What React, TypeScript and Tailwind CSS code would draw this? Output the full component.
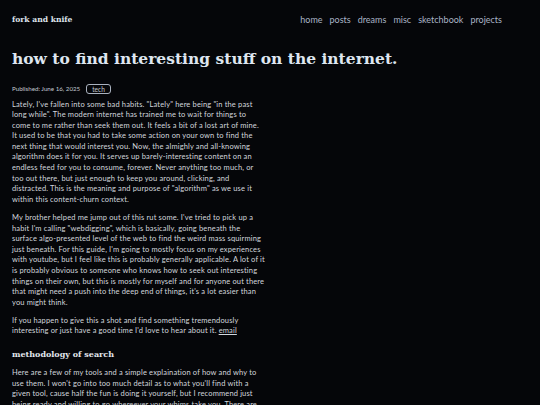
import React from 'react';

const slab = "font-['DejaVu_Serif',serif]";
const body = "font-['Lato',sans-serif]";

const navItems = ['home', 'posts', 'dreams', 'misc', 'sketchbook', 'projects'];

export default function App() {
  return (
    <div className={`min-h-[405px] bg-[#050609] text-[#d2d6dd] ${body}`}>
      {/* Header */}
      <header className="flex h-[40px] items-center justify-between pl-3 pr-[38px]">
        <span className={`${slab} text-[7.6px] font-bold text-[#dfe4ec]`}>fork and knife</span>
        <nav className="flex gap-[7px] text-[9px] text-[#a9b4c6]">
          {navItems.map((item) => (
            <a key={item} href="#">{item}</a>
          ))}
        </nav>
      </header>

      <main className="px-3">
        <h1 className={`${slab} mt-[11px] text-[15.5px] font-bold leading-none text-[#dfe6f0]`}>
          how to find interesting stuff on the internet.
        </h1>

        <div className="mt-[17px] flex items-center gap-[6px] text-[6.2px] text-[#c4c9d1]">
          <span>Published: June 16, 2025</span>
          <span className="rounded-[3px] border border-[#aab2bf] px-[5px] text-[6.6px] leading-[8px]">tech</span>
        </div>

        <article className="mt-[6px] w-[253px] space-y-[7.5px] text-[7.5px] leading-[10.6px] tracking-[0.15px]">
          <p>
            Lately, I've fallen into some bad habits. "Lately" here being "in the past long while". The modern
            internet has trained me to wait for things to come to me rather than seek them out. It feels a bit of a
            lost art of mine. It used to be that you had to take some action on your own to find the next thing that
            would interest you. Now, the almighly and all-knowing algorithm does it for you. It serves up
            barely-interesting content on an endless feed for you to consume, forever. Never anything too much, or too
            out there, but just enough to keep you around, clicking, and distracted. This is the meaning and purpose of
            "algorithm" as we use it within this content-churn context.
          </p>
          <p>
            My brother helped me jump out of this rut some. I've tried to pick up a habit I'm calling "webdigging",
            which is basically, going beneath the surface algo-presented level of the web to find the weird mass
            squirming just beneath. For this guide, I'm going to mostly focus on my experiences with youtube, but I
            feel like this is probably generally applicable. A lot of it is probably obvious to someone who knows how
            to seek out interesting things on their own, but this is mostly for myself and for anyone out there that
            might need a push into the deep end of things, it's a lot easier than you might think.
          </p>
          <p>
            If you happen to give this a shot and find something tremendously interesting or just have a good time
            I'd love to hear about it. <a href="#" className="underline">email</a>
          </p>
          <h2 className={`${slab} pt-[4px] text-[8px] font-bold leading-[12px] tracking-normal text-[#e3e7ee]`}>
            methodology of search
          </h2>
          <p>
            Here are a few of my tools and a simple explaination of how and why to use them. I won't go into too much
            detail as to what you'll find with a given tool, cause half the fun is doing it yourself, but I recommend
            just being ready and willing to go whereever your whims take you. There are
          </p>
        </article>
      </main>
    </div>
  );
}
